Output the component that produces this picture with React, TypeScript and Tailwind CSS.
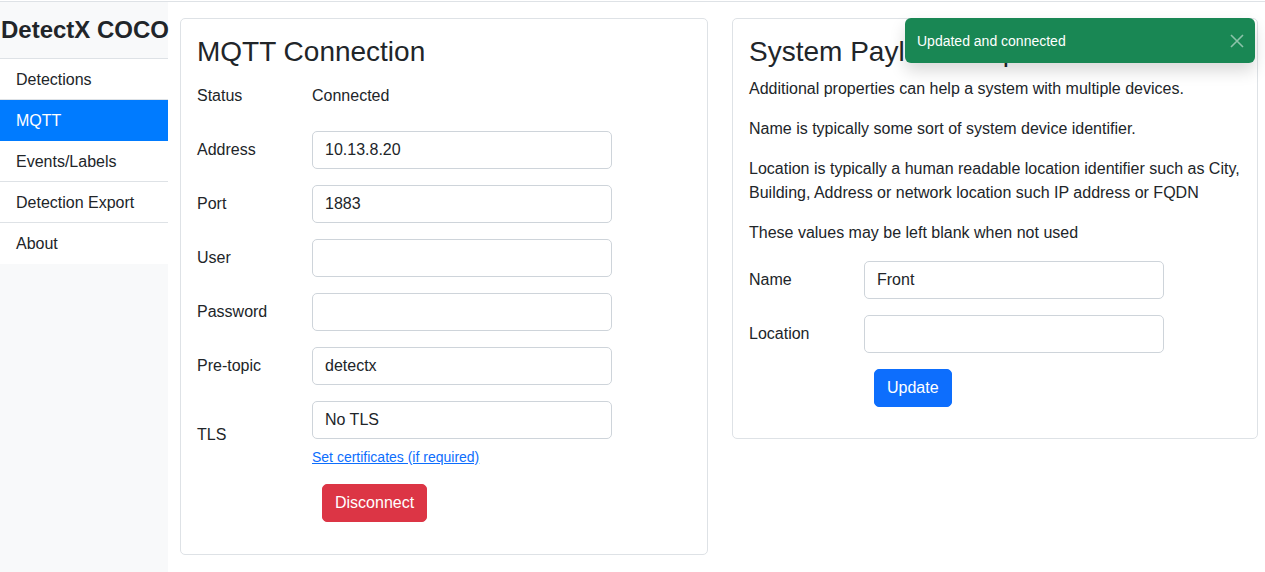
import React from "react";

const font = { fontFamily: '"Liberation Sans", Arial, sans-serif' };

function Row({ label, value, children }: { label: string; value?: string; children?: React.ReactNode }) {
  return (
    <div className="flex items-center mb-4">
      <div className="w-[115px] shrink-0">{label}</div>
      <div className="flex flex-col">
        {children ?? (
          <div className="w-[300px] h-[38px] border border-[#ced4da] rounded-[5px] px-3 flex items-center bg-white">
            {value}
          </div>
        )}
      </div>
    </div>
  );
}

export default function App() {
  const nav = ["Detections", "MQTT", "Events/Labels", "Detection Export", "About"];
  return (
    <div style={font} className="relative w-[1265px] h-[572px] bg-white text-[#212529] text-base leading-6 overflow-hidden">
      <div className="h-[2px] border-b border-[#dee2e6]"></div>
      <div className="flex">
        <div className="w-[168px] shrink-0 bg-[#f8f9fa] h-[570px]">
          <div className="h-[57px] flex items-center border-b border-[#dee2e6] pl-[1px]">
            <span className="text-[24px] font-bold leading-none whitespace-nowrap">DetectX COCO</span>
          </div>
          {nav.map((n, i) => (
            <div
              key={n}
              className={
                n === "MQTT"
                  ? "h-[41px] pl-4 pt-[1px] flex items-center bg-[#007bff] text-white border-b border-[#007bff]"
                  : i === nav.length - 1
                  ? "h-[41px] pl-4 pt-[1px] flex items-center bg-white"
                  : "h-[41px] pl-4 pt-[1px] flex items-center bg-white border-b border-[#dee2e6]"
              }
            >
              {n}
            </div>
          ))}
        </div>
        <div className="flex items-start gap-6 pl-3 pt-4">
          <div className="w-[528px] border border-[#dee2e6] rounded-[5px] p-4 pb-[32px]">
            <h3 className="text-[28px] leading-[34px] mb-2">MQTT Connection</h3>
            <Row label="Status">
              <div className="h-[38px] flex items-center">Connected</div>
            </Row>
            <Row label="Address" value="10.13.8.20" />
            <Row label="Port" value="1883" />
            <Row label="User" value="" />
            <Row label="Password" value="" />
            <Row label="Pre-topic" value="detectx" />
            <Row label="TLS">
              <div className="w-[300px] h-[38px] border border-[#ced4da] rounded-[5px] px-3 flex items-center bg-white">
                No TLS
              </div>
              <a className="mt-2 text-[14px] leading-[21px] text-[#0d6efd] underline">Set certificates (if required)</a>
            </Row>
            <div className="pl-[125px]">
              <button className="h-[38px] px-3 rounded-[5px] bg-[#dc3545] text-white border border-[#dc3545]">Disconnect</button>
            </div>
          </div>
          <div className="w-[526px] border border-[#dee2e6] rounded-[5px] p-4 pb-[31px]">
            <h3 className="text-[28px] leading-[34px] mb-2">System Payload Properties</h3>
            <p className="mb-4">Additional properties can help a system with multiple devices.</p>
            <p className="mb-4">Name is typically some sort of system device identifier.</p>
            <p className="mb-4">
              Location is typically a human readable location identifier such as City, Building, Address or network location such IP address or FQDN
            </p>
            <p className="mb-4">These values may be left blank when not used</p>
            <Row label="Name" value="Front" />
            <Row label="Location" value="" />
            <div className="pl-[125px]">
              <button className="h-[38px] px-3 rounded-[5px] bg-[#0d6efd] text-white border border-[#0d6efd]">Update</button>
            </div>
          </div>
        </div>
      </div>
      <div className="absolute top-[18px] right-[10px] w-[350px] h-[45px] bg-[#198754] rounded-[6px] shadow-[0_8px_16px_rgba(0,0,0,0.15)] flex items-center justify-between pl-3 pr-[10px] text-white text-[14px]">
        <span>Updated and connected</span>
        <svg width="16" height="16" viewBox="0 0 16 16" className="opacity-50">
          <path d="M2 2 L14 14 M14 2 L2 14" stroke="white" strokeWidth="1.6" fill="none" />
        </svg>
      </div>
    </div>
  );
}
